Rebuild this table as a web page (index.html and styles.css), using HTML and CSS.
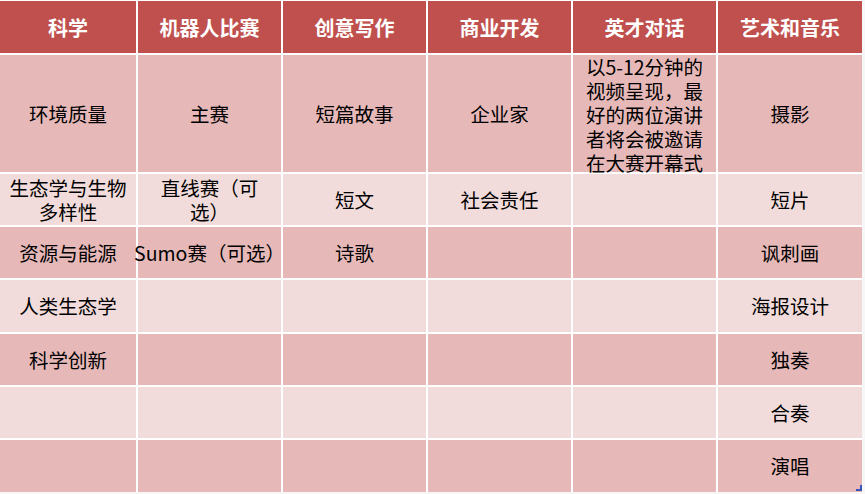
FILE: index.html
```html
<!DOCTYPE html>
<html lang="zh-CN">
<head>
<meta charset="utf-8">
<title>比赛项目</title>
<link rel="stylesheet" href="styles.css">
</head>
<body>
<div class="sheet">
  <div class="grid">
    <div class="cell head">科学</div>
    <div class="cell head">机器人比赛</div>
    <div class="cell head">创意写作</div>
    <div class="cell head">商业开发</div>
    <div class="cell head">英才对话</div>
    <div class="cell head">艺术和音乐</div>

    <div class="cell dark">环境质量</div>
    <div class="cell dark">主赛</div>
    <div class="cell dark">短篇故事</div>
    <div class="cell dark">企业家</div>
    <div class="cell dark long">以5-12分钟的<br>视频呈现，最<br>好的两位演讲<br>者将会被邀请<br>在大赛开幕式</div>
    <div class="cell dark">摄影</div>

    <div class="cell light">生态学与生物<br>多样性</div>
    <div class="cell light">直线赛（可<br>选）</div>
    <div class="cell light">短文</div>
    <div class="cell light">社会责任</div>
    <div class="cell light"></div>
    <div class="cell light">短片</div>

    <div class="cell dark">资源与能源</div>
    <div class="cell dark">Sumo赛（可选）</div>
    <div class="cell dark">诗歌</div>
    <div class="cell dark"></div>
    <div class="cell dark"></div>
    <div class="cell dark">讽刺画</div>

    <div class="cell light">人类生态学</div>
    <div class="cell light"></div>
    <div class="cell light"></div>
    <div class="cell light"></div>
    <div class="cell light"></div>
    <div class="cell light">海报设计</div>

    <div class="cell dark">科学创新</div>
    <div class="cell dark"></div>
    <div class="cell dark"></div>
    <div class="cell dark"></div>
    <div class="cell dark"></div>
    <div class="cell dark">独奏</div>

    <div class="cell light"></div>
    <div class="cell light"></div>
    <div class="cell light"></div>
    <div class="cell light"></div>
    <div class="cell light"></div>
    <div class="cell light">合奏</div>

    <div class="cell dark"></div>
    <div class="cell dark"></div>
    <div class="cell dark"></div>
    <div class="cell dark"></div>
    <div class="cell dark"></div>
    <div class="cell dark">演唱</div>
  </div>
  <svg class="handle" width="6" height="6" viewBox="0 0 6 6"><path d="M4 0H6V6H0V4H4Z" fill="#3a55b8"/></svg>
</div>
</body>
</html>
```

FILE: styles.css
```css
html, body {
  margin: 0;
  padding: 0;
  background: #ffffff;
}

body {
  width: 865px;
  height: 494px;
  overflow: hidden;
  font-family: "Noto Sans CJK SC", "Noto Sans", sans-serif;
}

.sheet {
  position: relative;
  width: 865px;
  height: 494px;
  background: #f7f7f7;
}

.grid {
  display: grid;
  width: 862px;
  grid-template-columns: 136px 143px 143px 143px 143px 144px;
  grid-template-rows: 52px 117px 51px 51px 52px 51px 51px 52px;
  gap: 2px;
  padding-top: 1px;
  background: #ffffff;
}

.cell {
  display: flex;
  align-items: center;
  justify-content: center;
  text-align: center;
  white-space: nowrap;
  font-size: 19.5px;
  line-height: 24px;
  color: #000000;
}

.head {
  background: #c0504d;
  color: #ffffff;
  font-weight: 700;
  font-size: 20px;
  padding-top: 2px;
}

.dark {
  background: #e6b9b8;
}

.light {
  background: #f2dcdb;
}

.long {
  align-items: flex-start;
  margin-top: 0;
  line-height: 24px;
  padding-bottom: 4px;
}

.handle {
  position: absolute;
  left: 856px;
  top: 485px;
}
```
